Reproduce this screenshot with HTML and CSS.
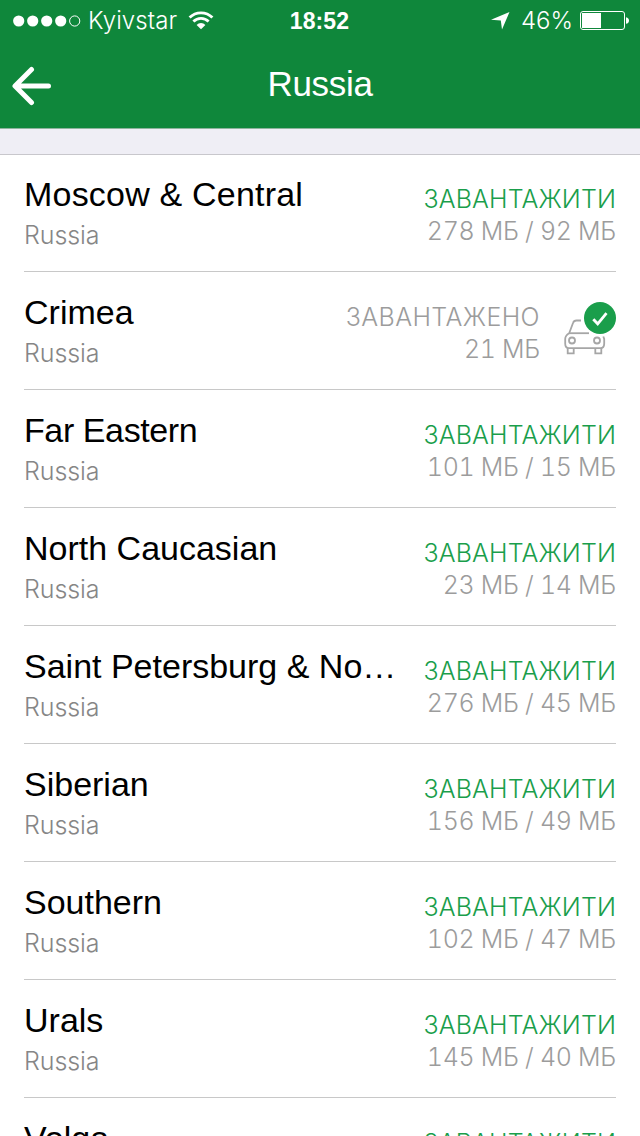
FILE: index.html
```html
<!DOCTYPE html>
<html lang="uk">
<head>
  <meta charset="UTF-8">
  <meta name="viewport" content="width=device-width, initial-scale=1.0">
  <title>Russia</title>
  <link rel="stylesheet" href="styles.css">
</head>
<body>

  <header class="header">
    <div class="status-bar">
      <div class="status-left">
        <svg class="signal" width="68" height="12" viewBox="0 0 68 12">
          <circle cx="5.7" cy="6" r="5.6" fill="#fff"/>
          <circle cx="19.7" cy="6" r="5.6" fill="#fff"/>
          <circle cx="33.7" cy="6" r="5.6" fill="#fff"/>
          <circle cx="47.7" cy="6" r="5.6" fill="#fff"/>
          <circle cx="61.7" cy="6" r="5.1" fill="none" stroke="#fff"/>
        </svg>
        <span class="carrier">Kyivstar</span>
        <svg class="wifi" width="26" height="19" viewBox="0 0 26 19">
          <path d="M1.6 6.6a16 16 0 0 1 22.8 0" fill="none" stroke="#fff" stroke-width="2.8"/>
          <path d="M5.4 10.6a10.8 10.8 0 0 1 15.2 0" fill="none" stroke="#fff" stroke-width="2.8"/>
          <path d="M8.6 13.9a6.2 6.2 0 0 1 8.8 0L13 18.3z" fill="#fff"/>
        </svg>
      </div>
      <div class="time">18:52</div>
      <div class="status-right">
        <svg class="location" width="19" height="18" viewBox="0 0 19 18">
          <path d="M18.5 0L11 17.6L9.8 8.6L0 7.8z" fill="#fff"/>
        </svg>
        <span class="percent">46%</span>
        <svg class="battery" width="50" height="19" viewBox="0 0 50 19">
          <rect x="0.5" y="0.5" width="44" height="18" rx="2.5" fill="none" stroke="#fff"/>
          <rect x="2" y="2" width="19" height="15" fill="#fff"/>
          <path d="M46 6.2c4 .6 4 6 0 6.6z" fill="#fff"/>
        </svg>
      </div>
    </div>
    <div class="nav-bar">
      <svg class="back" width="40" height="40" viewBox="0 0 40 40">
        <path d="M19.5 3.5L3 20L19.5 36.5M3.5 20H36.5" fill="none" stroke="#fff" stroke-width="5" stroke-linecap="round" stroke-linejoin="round"/>
      </svg>
      <h1 class="title">Russia</h1>
    </div>
  </header>

  <ul class="list">
    <li class="row">
      <div class="region">
        <div class="name wide">Moscow &amp; Central</div>
        <div class="country">Russia</div>
      </div>
      <div class="info">
        <div class="download">ЗАВАНТАЖИТИ</div>
        <div class="size">278 МБ / 92 МБ</div>
      </div>
    </li>
    <li class="row">
      <div class="region">
        <div class="name">Crimea</div>
        <div class="country">Russia</div>
      </div>
      <div class="info">
        <div class="downloaded">ЗАВАНТАЖЕНО</div>
        <div class="size">21 МБ</div>
      </div>
      <svg class="car" width="52" height="54" viewBox="0 0 52 54">
        <g fill="none" stroke="#a6a6a6" stroke-width="1.8">
          <path d="M17 19.5H12.5Q9.8 19.5 9 22L5.2 32.2Q1.2 34.5 1.2 38V42.5Q1.2 47.2 5 47.2H36.5Q40.2 47.2 40.2 42.5V38L39.3 35.5"/>
          <path d="M5.2 32.2H25"/>
          <circle cx="8" cy="39.5" r="3"/>
          <circle cx="33" cy="39.5" r="3"/>
          <path d="M3.7 47V52.4H9.7V47.5M31.3 47.5V52.4H37.3V47"/>
        </g>
        <circle cx="36" cy="17" r="16" fill="#1a9e4b"/>
        <path d="M29.3 18.2L33.7 22.8L42.5 12.2" fill="none" stroke="#fff" stroke-width="2.8"/>
      </svg>
    </li>
    <li class="row">
      <div class="region">
        <div class="name narrow">Far Eastern</div>
        <div class="country">Russia</div>
      </div>
      <div class="info">
        <div class="download">ЗАВАНТАЖИТИ</div>
        <div class="size">101 МБ / 15 МБ</div>
      </div>
    </li>
    <li class="row">
      <div class="region">
        <div class="name">North Caucasian</div>
        <div class="country">Russia</div>
      </div>
      <div class="info">
        <div class="download">ЗАВАНТАЖИТИ</div>
        <div class="size">23 МБ / 14 МБ</div>
      </div>
    </li>
    <li class="row">
      <div class="region">
        <div class="name">Saint Petersburg &amp; No…</div>
        <div class="country">Russia</div>
      </div>
      <div class="info">
        <div class="download">ЗАВАНТАЖИТИ</div>
        <div class="size">276 МБ / 45 МБ</div>
      </div>
    </li>
    <li class="row">
      <div class="region">
        <div class="name">Siberian</div>
        <div class="country">Russia</div>
      </div>
      <div class="info">
        <div class="download">ЗАВАНТАЖИТИ</div>
        <div class="size">156 МБ / 49 МБ</div>
      </div>
    </li>
    <li class="row">
      <div class="region">
        <div class="name">Southern</div>
        <div class="country">Russia</div>
      </div>
      <div class="info">
        <div class="download">ЗАВАНТАЖИТИ</div>
        <div class="size">102 МБ / 47 МБ</div>
      </div>
    </li>
    <li class="row">
      <div class="region">
        <div class="name">Urals</div>
        <div class="country">Russia</div>
      </div>
      <div class="info">
        <div class="download">ЗАВАНТАЖИТИ</div>
        <div class="size">145 МБ / 40 МБ</div>
      </div>
    </li>
    <li class="row">
      <div class="region">
        <div class="name">Volga</div>
      </div>
      <div class="info">
        <div class="download">ЗАВАНТАЖИТИ</div>
      </div>
    </li>
  </ul>

</body>
</html>
```

FILE: styles.css
```css
* {
  margin: 0;
  padding: 0;
  box-sizing: border-box;
}

body {
  width: 640px;
  height: 1136px;
  overflow: hidden;
  background-color: #efeef5;
  font-family: "Liberation Sans", Arial, sans-serif;
  color: #000;
}

/* Header */
.header {
  height: 129px;
  background-color: #0f873b;
  border-bottom: 1px solid #8fb49e;
  color: #fff;
}

.status-bar {
  display: grid;
  grid-template-columns: 1fr auto 1fr;
  align-items: center;
  height: 41px;
  padding: 0 10px 0 12px;
}

.status-left,
.status-right {
  display: flex;
  align-items: center;
}

.status-right {
  justify-content: flex-end;
}

.signal {
  margin-left: 1px;
}

.carrier {
  margin-left: 7px;
  font-family: Inter, sans-serif;
  font-size: 24px;
  font-weight: 300;
  letter-spacing: 0.1px;
}

.wifi {
  margin-left: 11px;
}

.time {
  padding: 2px 3px 0 0;
  font-size: 23px;
  font-weight: bold;
  letter-spacing: 0.1px;
}

.percent {
  margin: 0 7px 0 11px;
  font-family: Inter, sans-serif;
  font-size: 24px;
  font-weight: 300;
}

.nav-bar {
  display: grid;
  grid-template-columns: 60px 1fr 60px;
  align-items: center;
  height: 87px;
}

.back {
  margin-left: 12px;
  margin-top: 3px;
}

.title {
  padding-bottom: 2px;
  text-align: center;
  font-size: 35px;
  font-weight: normal;
  letter-spacing: -0.3px;
}

/* Region list */
.list {
  margin-top: 25px;
  padding: 0 24px;
  border-top: 1px solid #c8c7cc;
  background-color: #fff;
  list-style: none;
}

.row {
  display: flex;
  height: 118px;
  border-bottom: 1px solid #c8c8c8;
}

.row:first-child {
  height: 117px;
}

.region {
  flex: 1;
  padding-top: 20px;
}

.row:first-child .region {
  padding-top: 19px;
}

.name {
  font-size: 34px;
  line-height: 40px;
  white-space: nowrap;
}

.wide {
  letter-spacing: 0.2px;
}

.narrow {
  letter-spacing: -0.4px;
}

.country {
  margin-top: 5px;
  font-family: Inter, sans-serif;
  font-size: 25px;
  font-weight: 300;
  line-height: 32px;
  letter-spacing: -0.1px;
  color: #868686;
}

.info {
  padding-top: 29px;
  font-family: Inter, sans-serif;
  font-size: 25px;
  font-weight: 300;
  line-height: 32px;
  text-align: right;
  white-space: nowrap;
  color: #9c9c9c;
}

.row:first-child .info {
  padding-top: 28px;
}

.download {
  letter-spacing: 0.1px;
  color: #1a9e4b;
}

.downloaded {
  letter-spacing: 0.4px;
}

.size {
  font-variant-numeric: tabular-nums;
  letter-spacing: -0.3px;
}

.car {
  margin: 29px 0 0 24px;
}
```
